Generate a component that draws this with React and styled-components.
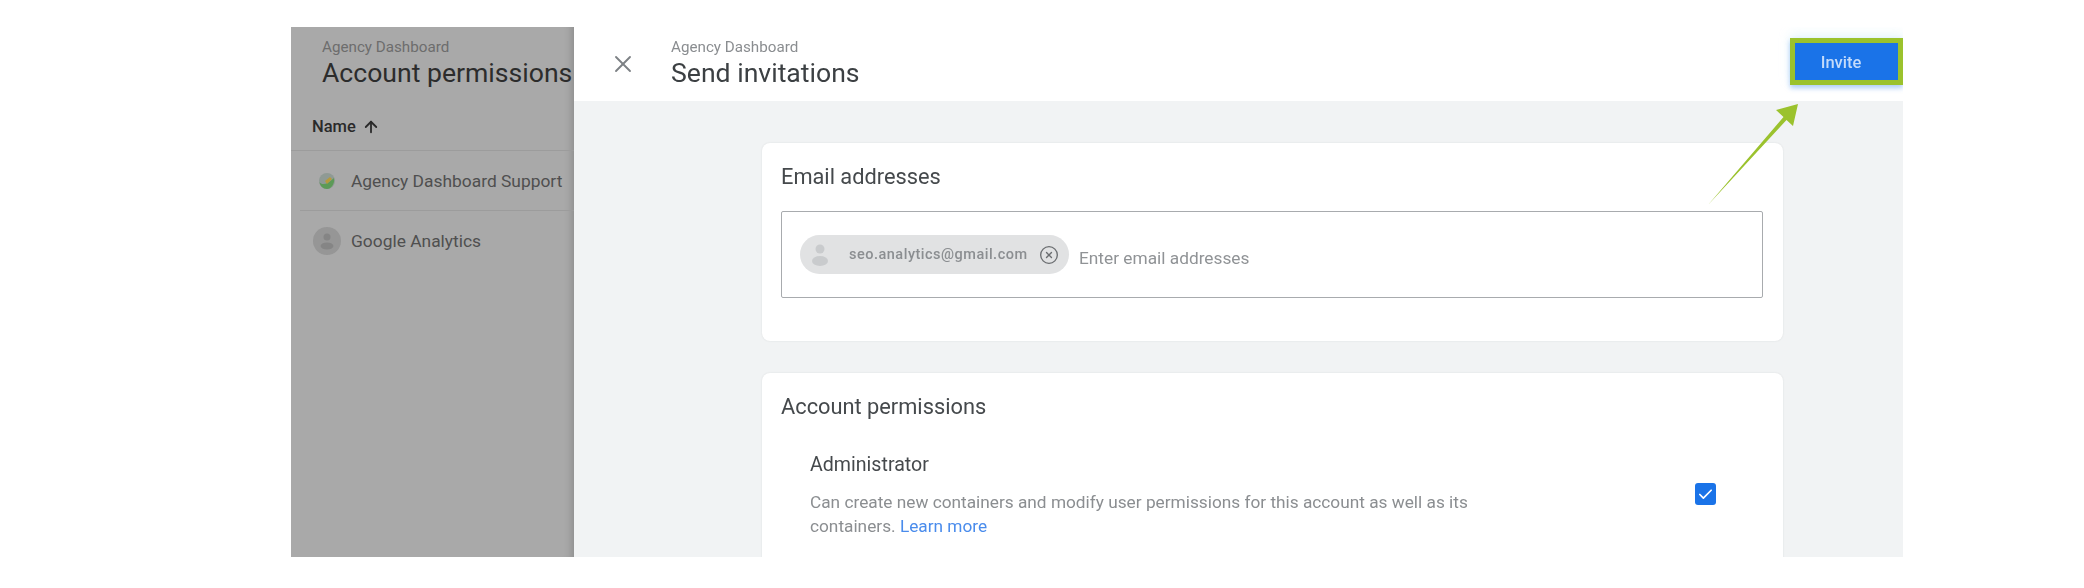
import styled, { createGlobalStyle } from 'styled-components'
import { ArrowUp, X, CircleX, Check } from 'lucide-react'

const GlobalStyle = createGlobalStyle`
  html, body {
    margin: 0;
    background: #fff;
    font-family: Roboto, "Liberation Sans", sans-serif;
  }
`

const Page = styled.div`
  width: 2084px;
  height: 588px;
  padding: 27px 0 0 291px;
  box-sizing: border-box;
  overflow: hidden;
`

const Frame = styled.div`
  position: relative;
  display: flex;
  width: 1612px;
  height: 530px;
  overflow: hidden;
  filter: blur(0.75px);
`

const Backdrop = styled.aside`
  flex: 0 0 283px;
  background: #a9a9a9;
  box-shadow: inset -10px 0 8px -8px rgba(0, 0, 0, 0.18);
  overflow: hidden;
`

const Heading = styled.div`
  padding: 11px 0;
  white-space: nowrap;
`

const BackdropHeading = styled(Heading)`
  padding-left: 31px;
`

const Crumb = styled.div`
  font-size: 15.2px;
  line-height: 18px;
  color: ${(p) => (p.$dim ? '#6d6d6d' : '#8a8d90')};
`

const Title = styled.div`
  font-size: 26.6px;
  line-height: 34px;
  color: ${(p) => (p.$dim ? '#2c2c2c' : '#3c4043')};
`

const NameHead = styled.div`
  display: flex;
  align-items: center;
  gap: 6px;
  height: 50px;
  padding: 2px 0 0 21px;
  font-size: 16.5px;
  font-weight: 500;
  color: #2a2a2a;
  border-bottom: 1px solid #9c9c9c;
  box-sizing: border-box;
`

const AccountRow = styled.div`
  display: flex;
  align-items: center;
  gap: 10px;
  height: 60px;
  margin-left: ${(p) => (p.$last ? '0' : '9px')};
  padding-left: ${(p) => (p.$last ? '22px' : '13px')};
  box-sizing: border-box;
  font-size: 17.4px;
  white-space: nowrap;
  color: #4f4f4f;
  border-bottom: ${(p) => (p.$last ? 'none' : '1px solid #9c9c9c')};
`

const RowIcon = styled.svg`
  flex: 0 0 28px;
  width: 28px;
  height: 28px;
`

const Sheet = styled.main`
  flex: 1;
  display: flex;
  flex-direction: column;
  min-width: 0;
`

const SheetHeader = styled.header`
  display: flex;
  align-items: center;
  height: 74px;
  flex: 0 0 74px;
  background: #fff;
  padding-left: 35px;
`

const CloseButton = styled.button`
  display: flex;
  width: 28px;
  height: 28px;
  padding: 0;
  margin-right: 34px;
  background: none;
  border: 0;
  color: #7d8185;
`

const InviteButton = styled.button`
  width: 113px;
  height: 47px;
  margin: 0 0 5px auto;
  padding: 2px 11px 0 0;
  box-sizing: border-box;
  border: 5px solid #9bc22d;
  background: #1a73e8;
  color: #c4dbfa;
  font-family: inherit;
  font-size: 16.5px;
  font-weight: 500;
  box-shadow: 0 3px 5px rgba(26, 115, 232, 0.35), 0 -4px 10px rgba(190, 232, 250, 0.35);
`

const SheetBody = styled.div`
  flex: 1;
  display: flex;
  flex-direction: column;
  gap: 32px;
  padding: 42px 120px 0 188px;
  background: #f1f3f4;
`

const Card = styled.section`
  flex-shrink: 0;
  padding: 22px 19px ${(p) => (p.$open ? '60px' : '43px')};
  background: #fff;
  border-radius: 8px;
  box-shadow: 0 0 2px rgba(60, 64, 67, 0.12);
`

const CardTitle = styled.h2`
  margin: 0;
  font-size: 21.8px;
  font-weight: 400;
  line-height: 24px;
  color: #45494c;
`

const EmailField = styled.div`
  display: flex;
  align-items: flex-start;
  gap: 10px;
  width: 982px;
  height: 87px;
  margin-top: 22px;
  padding: 23px 18px 0;
  box-sizing: border-box;
  border: 1px solid #a8abae;
  border-radius: 2px;
`

const Chip = styled.div`
  display: flex;
  align-items: center;
  width: 269px;
  height: 39px;
  flex-shrink: 0;
  box-sizing: border-box;
  padding-left: 6px;
  background: #e1e2e3;
  border-radius: 20px;
  color: #7e8184;
`

const ChipText = styled.span`
  margin-left: 15px;
  font-size: 14.5px;
  font-weight: 500;
  letter-spacing: 0.5px;
  white-space: nowrap;
  color: #8b8e91;
`

const ChipClear = styled.span`
  display: flex;
  margin-left: 11px;
  color: #6a6d70;
`

const Placeholder = styled.span`
  margin-top: 13px;
  font-size: 17.3px;
  line-height: 20px;
  white-space: nowrap;
  color: #909396;
`

const PermissionRow = styled.div`
  display: flex;
  justify-content: space-between;
  margin-top: 34px;
  padding-left: 29px;
`

const PermissionName = styled.div`
  font-size: 19.6px;
  line-height: 24px;
  color: #45494c;
`

const PermissionText = styled.p`
  width: 720px;
  margin: 13px 0 0;
  font-size: 17.25px;
  line-height: 24px;
  color: #8b8e91;
`

const LearnMore = styled.a`
  color: #4a8cec;
`

const Checkbox = styled.span`
  display: flex;
  align-items: center;
  justify-content: center;
  width: 21px;
  height: 22px;
  margin: 30px 48px 0 0;
  border-radius: 3px;
  background: #1a73e8;
  color: #fff;
`

const PointerArrow = styled.svg`
  position: absolute;
  left: 1410px;
  top: 70px;
  width: 105px;
  height: 115px;
`

function PersonGlyph () {
  return (
    <svg width='28' height='28' viewBox='0 0 28 28' aria-hidden='true'>
      <circle cx='14' cy='8' r='4.5' fill='#c9cbcd' />
      <ellipse cx='14' cy='20' rx='8' ry='5' fill='#c9cbcd' />
    </svg>
  )
}

function App () {
  return (
    <Page>
      <GlobalStyle />
      <Frame>
        <Backdrop>
          <BackdropHeading>
            <Crumb $dim>Agency Dashboard</Crumb>
            <Title $dim>Account permissions</Title>
          </BackdropHeading>
          <NameHead>
            Name <ArrowUp size={18} strokeWidth={2.4} />
          </NameHead>
          <AccountRow>
            <RowIcon viewBox='0 0 28 28' aria-hidden='true'>
              <circle cx='14' cy='14' r='8' fill='#8f9a94' />
              <path d='M6.5 15 C9 19 15 17 21 11 C22 17 18 22 14 22 C10 22 7 19 6.5 15Z' fill='#5c9a57' />
              <path d='M12 14 L17 10 L19 12 L14 17Z' fill='#b59a3c' />
            </RowIcon>
            Agency Dashboard Support
          </AccountRow>
          <AccountRow $last>
            <RowIcon viewBox='0 0 28 28' aria-hidden='true'>
              <circle cx='14' cy='14' r='14' fill='#969696' />
              <circle cx='14' cy='10' r='3.5' fill='#858585' />
              <ellipse cx='14' cy='19' rx='6.5' ry='3.5' fill='#858585' />
            </RowIcon>
            Google Analytics
          </AccountRow>
        </Backdrop>
        <Sheet>
          <SheetHeader>
            <CloseButton aria-label='Close'>
              <X size={28} strokeWidth={1.6} />
            </CloseButton>
            <Heading>
              <Crumb>Agency Dashboard</Crumb>
              <Title>Send invitations</Title>
            </Heading>
            <InviteButton>Invite</InviteButton>
          </SheetHeader>
          <SheetBody>
            <Card>
              <CardTitle>Email addresses</CardTitle>
              <EmailField>
                <Chip>
                  <PersonGlyph />
                  <ChipText>seo.analytics@gmail.com</ChipText>
                  <ChipClear>
                    <CircleX size={20} strokeWidth={1.6} />
                  </ChipClear>
                </Chip>
                <Placeholder>Enter email addresses</Placeholder>
              </EmailField>
            </Card>
            <Card $open>
              <CardTitle>Account permissions</CardTitle>
              <PermissionRow>
                <div>
                  <PermissionName>Administrator</PermissionName>
                  <PermissionText>
                    Can create new containers and modify user permissions for this account as well as its containers. <LearnMore>Learn more</LearnMore>
                  </PermissionText>
                </div>
                <Checkbox>
                  <Check size={17} strokeWidth={2.4} />
                </Checkbox>
              </PermissionRow>
            </Card>
          </SheetBody>
        </Sheet>
        <PointerArrow viewBox='0 0 105 115' aria-hidden='true'>
          <polygon points='97,7 75,13 82.5,20 7,108 85.5,23 92,29' fill='#9bc22d' />
        </PointerArrow>
      </Frame>
    </Page>
  )
}

export default App
